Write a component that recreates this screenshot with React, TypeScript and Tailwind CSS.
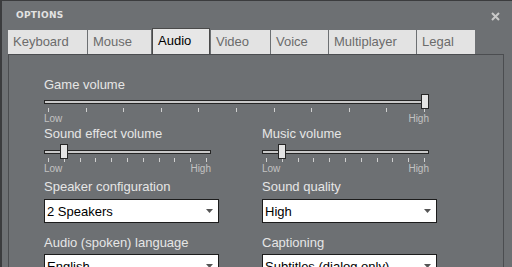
import React from 'react';

const tabs = [
  { name: 'Keyboard', w: 'w-[79px]' },
  { name: 'Mouse', w: 'w-[63px]' },
  { name: 'Audio', w: 'w-[58px]', active: true },
  { name: 'Video', w: 'w-[59px]' },
  { name: 'Voice', w: 'w-[57px]' },
  { name: 'Multiplayer', w: 'w-[87px]' },
  { name: 'Legal', w: 'w-[58px]' },
];

const Label: React.FC<{ children: React.ReactNode; className?: string }> = ({ children, className = '' }) => (
  <div className={`text-[13px] leading-[15px] text-[#e6e6e6] ${className}`}>{children}</div>
);

const Slider: React.FC<{ width: number; pos: number; className: string }> = ({ width, pos, className }) => {
  const left = (pos * (width - 8)) / 10;
  return (
    <div className={className}>
      <div className="relative h-[15px]">
        <div className="absolute left-0 right-0 top-[6px] h-[4px] border border-[#262626] bg-[#c9c9c9]" />
        <div
          className="absolute top-0 h-[15px] w-[8px] border border-[#262626] bg-[#e4e4e4]"
          style={{ left }}
        />
      </div>
      <div className="mt-[-1px] flex h-[4px] justify-between px-[4px]">
        {Array.from({ length: 11 }).map((_, i) => (
          <div key={i} className="h-full w-px bg-[#cfcfcf]" />
        ))}
      </div>
      <div className="mt-[2px] flex justify-between text-[10px] leading-[10px] text-[#c2c2c2]">
        <span>Low</span>
        <span>High</span>
      </div>
    </div>
  );
};

const Select: React.FC<{ value: string }> = ({ value }) => (
  <div className="flex h-[24px] w-[175px] items-center justify-between border border-[#1c1c1c] bg-white pl-[2px] pr-[5px] text-[13px] leading-[15px] text-black">
    <span>{value}</span>
    <svg width="7" height="4" viewBox="0 0 7 4">
      <path d="M0 0H7L3.5 4Z" fill="#555" />
    </svg>
  </div>
);

const App: React.FC = () => {
  return (
    <div className="flex h-[267px] w-[512px] flex-col overflow-hidden border-l-2 border-t border-[#3b3c3e] bg-[#6d7073] font-['Liberation_Sans',Arial,sans-serif]">
      <div className="flex h-[27px] shrink-0 items-start justify-between pl-[14px] pr-[12px] pt-[9px]">
        <span className="font-['DejaVu_Sans',sans-serif] text-[9px] font-bold leading-[11px] tracking-[0.3px] text-[#e2e2e2]">
          OPTIONS
        </span>
        <svg width="9" height="9" viewBox="0 0 9 9" className="mt-[2px]">
          <path d="M1 1L8 8M8 1L1 8" stroke="#c9c9c9" strokeWidth="2" />
        </svg>
      </div>

      <div className="ml-[6px] flex h-[26px] shrink-0 items-end gap-px">
        {tabs.map((t) =>
          t.active ? (
            <div
              key={t.name}
              className={`${t.w} flex h-[26px] items-center border border-b-0 border-[#4a4a4a] bg-[#e7e7e7] pb-[1px] pl-[5px] text-[13px] text-black`}
            >
              {t.name}
            </div>
          ) : (
            <div
              key={t.name}
              className={`${t.w} flex h-[24px] items-center bg-[#e3e3e3] pl-[5px] text-[13px] text-[#6b6b6b]`}
            >
              {t.name}
            </div>
          )
        )}
      </div>

      <div className="ml-[6px] h-[260px] w-[496px] shrink-0 border border-b-0 border-[#4b4d50] pl-[35px] pt-[22px]">
        <Label>Game volume</Label>
        <Slider width={385} pos={10} className="mt-[2px] w-[385px]" />

        <div className="mt-[2px] flex">
          <div className="w-[218px]">
            <Label>Sound effect volume</Label>
            <Slider width={167} pos={1} className="mt-[3px] w-[167px]" />
            <Label className="mt-[5px]">Speaker configuration</Label>
            <div className="mt-[5px]">
              <Select value="2 Speakers" />
            </div>
            <Label className="mt-[12px]">Audio (spoken) language</Label>
            <div className="mt-[4px]">
              <Select value="English" />
            </div>
          </div>
          <div>
            <Label>Music volume</Label>
            <Slider width={167} pos={1} className="mt-[3px] w-[167px]" />
            <Label className="mt-[5px]">Sound quality</Label>
            <div className="mt-[5px]">
              <Select value="High" />
            </div>
            <Label className="mt-[12px]">Captioning</Label>
            <div className="mt-[4px]">
              <Select value="Subtitles (dialog only)" />
            </div>
          </div>
        </div>
      </div>
    </div>
  );
};

export default App;
